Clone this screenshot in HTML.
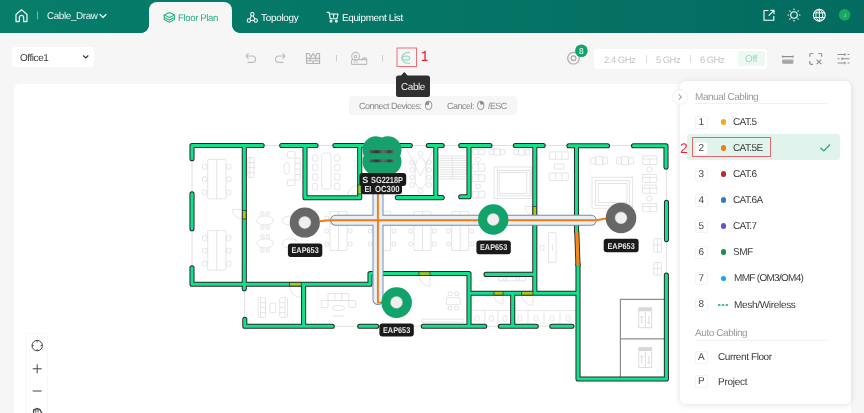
<!DOCTYPE html>
<html><head><meta charset="utf-8">
<style>
*{margin:0;padding:0;box-sizing:border-box}
html,body{text-rendering:geometricPrecision;width:864px;height:413px;overflow:hidden;background:#f6f6f6;font-family:"Liberation Sans",sans-serif;position:relative}
.abs{position:absolute}
.ht,.pt,.kb,svg{will-change:transform}
#hdr{left:0;top:0;width:864px;height:32.6px;background:linear-gradient(90deg,#077d6a 0%,#057566 50%,#046b60 100%)}
.ht{position:absolute;color:#fff;font-size:9.2px;white-space:nowrap;line-height:1}
#tab{left:149px;top:2px;width:83px;height:32px;background:#f6f6f6;border-radius:8px 8px 0 0}
.cnl{position:absolute;width:8px;height:8px;top:24.6px}
#dd{left:12px;top:47px;width:82px;height:20px;background:#fff;border-radius:3px}
#card{left:14px;top:84px;width:837px;height:340px;background:#fff;border-radius:6px}
#panel{left:680px;top:81px;width:171px;height:323px;background:#fff;border-radius:6px;box-shadow:0 1px 6px rgba(0,0,0,.12)}
.pt{position:absolute;font-size:9.6px;letter-spacing:-0.25px;color:#3a3a3a;white-space:nowrap;line-height:1}
.kb{position:absolute;width:12.5px;height:12.5px;border:1px solid #f3f3f3;border-radius:2px;background:#fff;font-size:10px;color:#4a4a4a;text-align:center;line-height:11.6px}
.dot{position:absolute;width:5.5px;height:5.5px;border-radius:50%}
</style></head><body>
<div id="hdr" class="abs"></div>
<div class="abs" style="left:0;top:32.6px;width:864px;height:1.4px;background:#fbfbfb"></div>
<div id="tab" class="abs"></div>
<div class="cnl" style="left:141px;background:radial-gradient(circle at 0 0,transparent 7.6px,#f6f6f6 8.2px)"></div>
<div class="cnl" style="left:232px;background:radial-gradient(circle at 100% 0,transparent 7.6px,#f6f6f6 8.2px)"></div>

<!-- header content -->
<svg class="abs" style="left:0;top:0" width="864" height="32" viewBox="0 0 864 32">
  <g fill="none" stroke="#e6f3ef" stroke-width="1.3" stroke-linejoin="round" stroke-linecap="round">
    <path d="M16,14.5 L21.5,9.8 L27,14.5 V21.5 H23.6 V17.5 A2.1,2.1 0 0 0 19.4,17.5 V21.5 H16 Z"/>
    <path d="M37.5,12 V19" stroke="#7fb9ad" stroke-width="1"/>
    <path d="M100,14.5 L103,17.5 L106,14.5"/>
  </g>
  <!-- floor plan icon -->
  <g fill="none" stroke="#2fb486" stroke-width="1.1" stroke-linejoin="round">
    <path d="M164.2,15 L169.4,12.4 L174.6,15 L169.4,17.6 Z"/>
    <path d="M164.2,15 V17.4 L169.4,20 L174.6,17.4 V15"/>
    <path d="M164.2,17.4 V19.6 L169.4,22.2 L174.6,19.6 V17.4"/>
  </g>
  <!-- topology icon -->
  <g fill="none" stroke="#fff" stroke-width="1.05">
    <circle cx="252.3" cy="14.2" r="1.7"/>
    <circle cx="248.9" cy="20.5" r="1.7"/>
    <circle cx="255.7" cy="20.5" r="1.7"/>
    <path d="M251.5,15.7 L249.8,18.9 M253.1,15.7 L254.8,18.9 M250.6,20.5 H254"/>
  </g>
  <!-- cart icon -->
  <g fill="none" stroke="#fff" stroke-width="1.1" stroke-linejoin="round" stroke-linecap="round">
    <path d="M327,12.2 H329 L330.3,18.8 H337 L338,14 H329.6"/>
    <circle cx="331" cy="21.3" r="0.9"/>
    <circle cx="336.3" cy="21.3" r="0.9"/>
    <path d="M333.6,14.5 V17.3"/>
  </g>
  <!-- right icons -->
  <g fill="none" stroke="#fff" stroke-width="1.1" stroke-linecap="round" stroke-linejoin="round">
    <path d="M768,10.5 H764 V20.3 H773.8 V16.3"/>
    <path d="M769,15.3 L774,10.3 M770.6,10.3 H774 V13.7"/>
    <circle cx="794" cy="15" r="3.3"/>
    <path d="M794,9 V9.6 M794,20.4 V21 M788,15 H788.6 M799.4,15 H800 M789.8,10.8 L790.1,11.1 M797.9,18.9 L798.2,19.2 M789.8,19.2 L790.1,18.9 M797.9,11.1 L798.2,10.8" stroke-width="1.2"/>
    <circle cx="819.3" cy="15.2" r="5.9"/>
    <path d="M819.3,9.3 C814.6,12 814.6,18.4 819.3,21.1 M819.3,9.3 C824,12 824,18.4 819.3,21.1 M819.3,9.3 V21.1 M814,12.9 H824.6 M814,17.5 H824.6" stroke-width="1"/>
  </g>
  <circle cx="844.6" cy="14.8" r="5.8" fill="#19a862"/>
  <text x="843.8" y="16.5" font-size="4" fill="#cfeee0" font-family="Liberation Sans">J</text>
</svg>
<div class="ht" style="left:46.5px;top:11.72px;font-size:9.9px;letter-spacing:-0.38px;color:#eaf5f2">Cable_Draw</div>
<div class="ht" style="left:178px;top:14.02px;font-size:9.6px;letter-spacing:-0.37px;color:#2aae80">Floor Plan</div>
<div class="ht" style="left:261.3px;top:13.72px;font-size:9.9px;letter-spacing:-0.25px;color:#fff">Topology</div>
<div class="ht" style="left:341.7px;top:13.77px;font-size:9.9px;letter-spacing:-0.32px;color:#fff">Equipment List</div>

<!-- toolbar -->
<div id="dd" class="abs"></div>
<div class="ht" style="left:19.6px;top:53.59px;font-size:10px;letter-spacing:-0.45px;color:#3a3a3a">Office1</div>
<svg class="abs" style="left:0;top:36px" width="864" height="48" viewBox="0 36 864 48">
  <path d="M83.3,55.5 L85.8,58 L88.3,55.5" fill="none" stroke="#333" stroke-width="1.1"/>
  <g fill="none" stroke="#bbb" stroke-width="1.1" stroke-linecap="round" stroke-linejoin="round">
    <path d="M246,56 H252.3 A3.2,3.2 0 0 1 252.3,62.4 H248 M248.2,53.6 L246,56 L248.2,58.4"/>
    <path d="M285,56 H278.7 A3.2,3.2 0 0 0 278.7,62.4 H283 M282.8,53.6 L285,56 L282.8,58.4"/>
  </g>
  <g fill="none" stroke="#b5b5b5" stroke-width="1.2">
    <path d="M306.5,53.5 V63.5 H319.5 V53.5 L317,53.5 L315.5,57 L313,53.5 L310.8,57 L309,53.5 Z"/>
    <path d="M306.5,58.3 H319.5 M306.5,61 H319.5 M310,58.3 V61 M316,58.3 V61 M313,61 V63.5"/>
  </g>
  <path d="M336.5,55 V61.5 M382.5,55 V61.5" stroke="#ccc" stroke-width="1"/>
  <g fill="none" stroke="#bcbcbc" stroke-width="1.1">
    <circle cx="355.6" cy="56.3" r="3.9"/>
    <circle cx="355.6" cy="56.5" r="1.3"/>
    <path d="M361.6,59.6 A3,3 0 0 1 367.2,59.6"/><path d="M362.8,59.6 L364.4,57.6 L365.6,59.6" stroke-width="0.7"/>
    <rect x="351.5" y="59.6" width="15.3" height="4.8" rx="1"/>
    <path d="M353.5,62 H358" stroke-width="0.8"/>
  </g>
  <rect x="397" y="48" width="19.5" height="18.5" fill="none" stroke="#ef6f74" stroke-width="1"/>
  <g fill="none" stroke="#8fd6bb" stroke-width="1.05" stroke-linecap="round">
    <path d="M409.6,52.4 C404.5,52.3 401.8,54.8 401.8,58 C401.8,61.2 404.5,63.4 409.6,63.3"/>
    <ellipse cx="405.9" cy="58" rx="3.9" ry="2.1"/>
  </g>
  <path d="M422.1,53.2 L425,51.6 V60.3 M421.9,60.3 H427.6" fill="none" stroke="#e8202a" stroke-width="1.3"/>
  <!-- AP count icon -->
  <g fill="none" stroke="#aaa" stroke-width="1.2">
    <circle cx="573.5" cy="58.2" r="5.8"/>
    <circle cx="573.5" cy="58.2" r="2.4"/>
  </g>
  <circle cx="581.4" cy="50.7" r="6.3" fill="#14a26b"/>
  <text x="581.4" y="53.8" font-size="8.5" fill="#fff" text-anchor="middle" font-family="Liberation Sans">8</text>
  <!-- ruler / fit / sliders -->
  <g fill="none" stroke="#8e8e8e" stroke-width="1.1">
    <path d="M782.5,55.5 V57.8 M793,55.5 V57.8 M782.5,56.6 H793"/>
    <rect x="782.2" y="59.6" width="11.2" height="4.2" rx="1" fill="#a3a3a3" stroke="none"/><path d="M784.2,60.2 V61.6 M786.2,60.2 V61 M788.2,60.2 V61.6 M790.2,60.2 V61 M792,60.2 V61.6" stroke="#d0d0d0" stroke-width="0.6"/>
    <path d="M809.8,56.8 V54.8 Q809.8,53.5 811.1,53.5 H813.2 M818.3,53.5 H820.4 Q821.7,53.5 821.7,54.8 V56.8 M809.8,61 V63 Q809.8,64.3 811.1,64.3 H813" stroke-width="1.2"/><path d="M816.6,59.6 L821.2,64.2 M821.2,59.6 L816.6,64.2" stroke-width="1.1"/>
    <path d="M837.5,54.5 H845 M847.5,54.5 H849.5 M845,53.2 V55.8 M837.5,58.7 H839.5 M842,58.7 H849.5 M842,57.4 V60 M837.5,63 H845 M847.5,63 H849.5 M845,61.7 V64.3"/>
  </g>
</svg>
<div class="abs" style="left:594px;top:49px;width:172.5px;height:19.5px;background:#fff;border-radius:3px"></div>
<div class="abs" style="left:737.5px;top:51px;width:27px;height:15px;background:#eef9f4;border-radius:2px"></div>
<div class="ht" style="left:604px;top:55.39px;font-size:9.4px;letter-spacing:-0.45px;color:#c4c4c4">2.4 GHz</div>
<div class="ht" style="left:655.8px;top:55.39px;font-size:9.4px;letter-spacing:-0.5px;color:#c4c4c4">5 GHz</div>
<div class="ht" style="left:700.2px;top:55.39px;font-size:9.4px;letter-spacing:-0.5px;color:#c4c4c4">6 GHz</div>
<div class="ht" style="left:744.6px;top:54.97px;font-size:9.9px;letter-spacing:-0.2px;color:#9ad8bf">Off</div>
<div class="abs" style="left:646px;top:54.5px;width:1px;height:8px;background:#ddd"></div>
<div class="abs" style="left:690px;top:54.5px;width:1px;height:8px;background:#ddd"></div>

<!-- canvas card -->
<div id="card" class="abs"></div>
<svg id="plan" class="abs" style="left:0;top:0" width="864" height="413" viewBox="0 0 864 413">
  <!-- walls dark -->
  <g id="outline" fill="none" stroke="#dcdcdc" stroke-width="0.9">
    <path d="M192,284 V145.5 H666.3 V379 H578 V326.2 H244.6 V284"/>
  </g>
  <g id="furn" fill="none" stroke="#dcdcdc" stroke-width="0.75">
<rect x="207.7" y="159.3" width="18.2" height="39.5" rx="0.5"/>
<path d="M216.8,159.3 L216.8,198.8"/>
<rect x="202.5" y="164.4" width="4.3" height="4.6" rx="0.8"/>
<rect x="226.6" y="164.4" width="4.3" height="4.6" rx="0.8"/>
<rect x="202.5" y="177.0" width="4.3" height="4.6" rx="0.8"/>
<rect x="226.6" y="177.0" width="4.3" height="4.6" rx="0.8"/>
<rect x="202.5" y="190.1" width="4.3" height="4.6" rx="0.8"/>
<rect x="226.6" y="190.1" width="4.3" height="4.6" rx="0.8"/>
<rect x="207.7" y="230.6" width="18.2" height="39.5" rx="0.5"/>
<path d="M216.8,230.6 L216.8,270.1"/>
<rect x="202.5" y="235.7" width="4.3" height="4.6" rx="0.8"/>
<rect x="226.6" y="235.7" width="4.3" height="4.6" rx="0.8"/>
<rect x="202.5" y="248.3" width="4.3" height="4.6" rx="0.8"/>
<rect x="226.6" y="248.3" width="4.3" height="4.6" rx="0.8"/>
<rect x="202.5" y="261.4" width="4.3" height="4.6" rx="0.8"/>
<rect x="226.6" y="261.4" width="4.3" height="4.6" rx="0.8"/>
<rect x="247.9" y="157.6" width="6.1" height="20.0" rx="1"/>
<path d="M247.9,162.6 L254.0,162.6"/>
<path d="M247.9,167.6 L254.0,167.6"/>
<path d="M247.9,172.6 L254.0,172.6"/>
<path d="M250.0,157.6 L250.0,177.6"/>
<ellipse cx="286.8" cy="168.3" rx="2.7" ry="6"/>
<rect x="287.6" y="151.6" width="7.4" height="6.4" rx="0.5"/>
<rect x="295.0" y="158.0" width="5.2" height="22.0" rx="0.5"/>
<path d="M295.0,163.5 L300.2,163.5"/>
<path d="M295.0,169.0 L300.2,169.0"/>
<path d="M295.0,174.5 L300.2,174.5"/>
<rect x="287.6" y="180.0" width="7.4" height="5.6" rx="0.5"/>
<rect x="321.7" y="153.0" width="9.3" height="36.0" rx="2"/>
<rect x="312.5" y="154.8" width="5.3" height="6.4" rx="1.5"/>
<rect x="334.6" y="154.8" width="5.3" height="6.4" rx="1.5"/>
<rect x="312.5" y="164.3" width="5.3" height="6.4" rx="1.5"/>
<rect x="334.6" y="164.3" width="5.3" height="6.4" rx="1.5"/>
<rect x="312.5" y="173.8" width="5.3" height="6.4" rx="1.5"/>
<rect x="334.6" y="173.8" width="5.3" height="6.4" rx="1.5"/>
<rect x="312.5" y="183.3" width="5.3" height="6.4" rx="1.5"/>
<rect x="334.6" y="183.3" width="5.3" height="6.4" rx="1.5"/>
<path d="M415.2,165 Q420.6,150 426.1,165 L426.1,183 Q420.6,194 415.2,183 Z"/>
<circle cx="420.6" cy="153.8" r="2.4"/>
<circle cx="420.6" cy="190.8" r="2.4"/>
<circle cx="412.2" cy="162.3" r="2.4"/>
<circle cx="429.0" cy="162.3" r="2.4"/>
<circle cx="412.2" cy="170.0" r="2.4"/>
<circle cx="429.0" cy="170.0" r="2.4"/>
<circle cx="412.2" cy="177.6" r="2.4"/>
<circle cx="429.0" cy="177.6" r="2.4"/>
<circle cx="412.2" cy="185.0" r="2.4"/>
<circle cx="429.0" cy="185.0" r="2.4"/>
<path d="M407.0,150.0 L420.6,176.0"/>
<path d="M420.6,176.0 L433.0,150.0"/>
<path d="M439.2,156.0 L466.0,156.0"/>
<path d="M439.2,158.3 L466.0,158.3"/>
<path d="M439.2,160.6 L466.0,160.6"/>
<path d="M439.2,162.9 L466.0,162.9"/>
<path d="M439.2,165.2 L466.0,165.2"/>
<path d="M439.2,167.5 L466.0,167.5"/>
<path d="M439.2,169.8 L466.0,169.8"/>
<path d="M439.2,172.1 L466.0,172.1"/>
<path d="M439.2,174.4 L466.0,174.4"/>
<path d="M439.2,176.7 L466.0,176.7"/>
<path d="M439.2,179.0 L466.0,179.0"/>
<path d="M452.3,156.0 L452.3,179.2"/>
<rect x="472.6" y="149.4" width="12.1" height="5.0" rx="0.5"/>
<path d="M478.6,149.4 L478.6,154.4"/>
<rect x="472.6" y="163.9" width="12.1" height="7.5" rx="0.5"/>
<path d="M478.6,163.9 L478.6,171.4"/>
<rect x="472.6" y="174.8" width="12.1" height="6.8" rx="0.5"/>
<path d="M478.6,174.8 L478.6,181.6"/>
<rect x="472.6" y="191.2" width="12.1" height="6.8" rx="0.5"/>
<path d="M478.6,191.2 L478.6,198.0"/>
<circle cx="478.0" cy="159.5" r="2.5"/>
<circle cx="478.0" cy="186.5" r="2.5"/>
<rect x="489.3" y="149.6" width="4.5" height="5.0" rx="0.5"/>
<rect x="493.8" y="148.8" width="6.5" height="6.4" rx="0.5"/>
<rect x="500.3" y="149.6" width="4.5" height="5.0" rx="0.5"/>
<rect x="514.0" y="149.6" width="4.5" height="5.0" rx="0.5"/>
<rect x="518.5" y="148.8" width="6.5" height="6.4" rx="0.5"/>
<rect x="525.0" y="149.6" width="4.5" height="5.0" rx="0.5"/>
<rect x="494.0" y="167.0" width="37.2" height="31.4" rx="0"/>
<rect x="497.3" y="170.4" width="32.7" height="25.4" rx="0"/>
<rect x="499.2" y="172.6" width="27.6" height="21.0" rx="0"/>
<rect x="549.3" y="151.9" width="19.0" height="7.4" rx="0.5"/>
<path d="M555.6,153.0 L555.6,159.3"/>
<path d="M562.0,153.0 L562.0,159.3"/>
<rect x="554.5" y="163.9" width="9.2" height="5.2" rx="0.5"/>
<rect x="549.3" y="173.0" width="19.0" height="7.6" rx="0.5"/>
<path d="M555.6,173.0 L555.6,179.5"/>
<path d="M562.0,173.0 L562.0,179.5"/>
<rect x="548.6" y="232.6" width="7.6" height="30.0" rx="0.5"/>
<path d="M552.4,244.0 L552.4,251.0"/>
<rect x="540.5" y="245.5" width="3.5" height="4.5" rx="0.5"/>
<rect x="590.7" y="157.6" width="5.0" height="6.3" rx="0.5"/>
<rect x="595.7" y="156.6" width="7.0" height="8.2" rx="0.5"/>
<rect x="602.7" y="157.6" width="5.0" height="6.3" rx="0.5"/>
<rect x="616.6" y="157.6" width="5.0" height="6.3" rx="0.5"/>
<rect x="621.6" y="156.6" width="7.0" height="8.2" rx="0.5"/>
<rect x="628.6" y="157.6" width="5.0" height="6.3" rx="0.5"/>
<rect x="642.6" y="156.0" width="14.3" height="8.5" rx="0.5"/>
<path d="M649.7,158.0 L649.7,164.5"/>
<path d="M642.6,159.0 L656.9,159.0"/>
<rect x="642.6" y="174.4" width="14.3" height="7.9" rx="0.5"/>
<path d="M649.7,176.4 L649.7,182.3"/>
<path d="M642.6,177.4 L656.9,177.4"/>
<rect x="642.6" y="185.2" width="14.3" height="8.1" rx="0.5"/>
<path d="M649.7,187.2 L649.7,193.3"/>
<path d="M642.6,188.2 L656.9,188.2"/>
<rect x="642.6" y="203.6" width="14.3" height="8.1" rx="0.5"/>
<path d="M649.7,205.6 L649.7,211.7"/>
<path d="M642.6,206.6 L656.9,206.6"/>
<circle cx="649.5" cy="169.4" r="2.6"/>
<circle cx="649.5" cy="198.5" r="2.6"/>
<rect x="592.0" y="177.2" width="40.7" height="31.0" rx="0"/>
<rect x="595.3" y="180.6" width="34.0" height="24.7" rx="0"/>
<rect x="598.2" y="183.6" width="28.8" height="18.9" rx="0"/>
<rect x="653.8" y="238.7" width="7.7" height="13.5" rx="0.5"/>
<path d="M657.6,238.7 L657.6,252.2"/>
<path d="M653.8,245.0 L661.5,245.0"/>
<rect x="653.8" y="262.5" width="7.7" height="12.5" rx="0.5"/>
<path d="M657.6,262.5 L657.6,275.0"/>
<path d="M653.8,268.5 L661.5,268.5"/>
<ellipse cx="265.1" cy="220.5" rx="8.3" ry="4.6"/>
<rect x="260.7" y="212.0" width="3.2" height="3.0" rx="0.3"/>
<rect x="260.7" y="226.0" width="3.2" height="3.0" rx="0.3"/>
<rect x="266.2" y="212.0" width="3.2" height="3.0" rx="0.3"/>
<rect x="266.2" y="226.0" width="3.2" height="3.0" rx="0.3"/>
<ellipse cx="290.5" cy="220.5" rx="8.3" ry="4.6"/>
<ellipse cx="265.1" cy="243.4" rx="8.3" ry="4.6"/>
<rect x="260.7" y="234.9" width="3.2" height="3.0" rx="0.3"/>
<rect x="260.7" y="248.9" width="3.2" height="3.0" rx="0.3"/>
<rect x="266.2" y="234.9" width="3.2" height="3.0" rx="0.3"/>
<rect x="266.2" y="248.9" width="3.2" height="3.0" rx="0.3"/>
<ellipse cx="290.5" cy="243.4" rx="8.3" ry="4.6"/>
<rect x="330.0" y="211.3" width="17.0" height="39.3" rx="0.5"/>
<path d="M338.5,211.3 L338.5,250.6"/>
<rect x="325.0" y="216.2" width="3.4" height="3.6" rx="0.3"/>
<rect x="348.6" y="216.2" width="3.4" height="3.6" rx="0.3"/>
<rect x="325.0" y="229.2" width="3.4" height="3.6" rx="0.3"/>
<rect x="348.6" y="229.2" width="3.4" height="3.6" rx="0.3"/>
<rect x="325.0" y="242.2" width="3.4" height="3.6" rx="0.3"/>
<rect x="348.6" y="242.2" width="3.4" height="3.6" rx="0.3"/>
<rect x="373.5" y="211.3" width="17.0" height="39.3" rx="0.5"/>
<path d="M382.0,211.3 L382.0,250.6"/>
<rect x="368.5" y="216.2" width="3.4" height="3.6" rx="0.3"/>
<rect x="392.1" y="216.2" width="3.4" height="3.6" rx="0.3"/>
<rect x="368.5" y="229.2" width="3.4" height="3.6" rx="0.3"/>
<rect x="392.1" y="229.2" width="3.4" height="3.6" rx="0.3"/>
<rect x="368.5" y="242.2" width="3.4" height="3.6" rx="0.3"/>
<rect x="392.1" y="242.2" width="3.4" height="3.6" rx="0.3"/>
<rect x="414.0" y="211.3" width="17.0" height="39.3" rx="0.5"/>
<path d="M422.5,211.3 L422.5,250.6"/>
<rect x="409.0" y="216.2" width="3.4" height="3.6" rx="0.3"/>
<rect x="432.6" y="216.2" width="3.4" height="3.6" rx="0.3"/>
<rect x="409.0" y="229.2" width="3.4" height="3.6" rx="0.3"/>
<rect x="432.6" y="229.2" width="3.4" height="3.6" rx="0.3"/>
<rect x="409.0" y="242.2" width="3.4" height="3.6" rx="0.3"/>
<rect x="432.6" y="242.2" width="3.4" height="3.6" rx="0.3"/>
<rect x="451.7" y="211.3" width="17.0" height="39.3" rx="0.5"/>
<path d="M460.2,211.3 L460.2,250.6"/>
<rect x="446.7" y="216.2" width="3.4" height="3.6" rx="0.3"/>
<rect x="470.3" y="216.2" width="3.4" height="3.6" rx="0.3"/>
<rect x="446.7" y="229.2" width="3.4" height="3.6" rx="0.3"/>
<rect x="470.3" y="229.2" width="3.4" height="3.6" rx="0.3"/>
<rect x="446.7" y="242.2" width="3.4" height="3.6" rx="0.3"/>
<rect x="470.3" y="242.2" width="3.4" height="3.6" rx="0.3"/>
<rect x="258.1" y="297.8" width="7.5" height="19.6" rx="1"/>
<path d="M260.5,297.8 L260.5,317.4"/>
<path d="M260.5,302.7 L265.6,302.7"/>
<path d="M260.5,307.6 L265.6,307.6"/>
<path d="M260.5,312.5 L265.6,312.5"/>
<rect x="279.7" y="297.8" width="7.8" height="19.6" rx="1"/>
<path d="M285.0,297.8 L285.0,317.4"/>
<path d="M279.7,302.7 L285.0,302.7"/>
<path d="M279.7,307.6 L285.0,307.6"/>
<path d="M279.7,312.5 L285.0,312.5"/>
<rect x="270.0" y="303.2" width="5.8" height="9.2" rx="0.5"/>
<rect x="328.0" y="293.5" width="20.8" height="7.0" rx="0.5"/>
<path d="M334.9,293.5 L334.9,300.5"/>
<path d="M341.8,293.5 L341.8,300.5"/>
<rect x="321.3" y="300.5" width="6.7" height="7.1" rx="0.5"/>
<rect x="348.8" y="300.5" width="6.8" height="7.1" rx="0.5"/>
<path d="M328,300.5 H348.8"/>
<ellipse cx="338.5" cy="308.0" rx="6" ry="2.5"/>
<path d="M332.5,316.0 L344.6,316.0"/>
<rect x="446.4" y="297.6" width="13.8" height="6.8" rx="0.5"/>
<rect x="448.2" y="292.0" width="3.6" height="3.5" rx="0.3"/>
<rect x="448.2" y="306.5" width="3.6" height="3.5" rx="0.3"/>
<rect x="454.8" y="292.0" width="3.6" height="3.5" rx="0.3"/>
<rect x="454.8" y="306.5" width="3.6" height="3.5" rx="0.3"/>
<rect x="421.8" y="319.2" width="42.2" height="3.0" rx="0.5"/>
<rect x="498.6" y="276.9" width="27.1" height="3.9" rx="0.5"/>
<circle cx="505.0" cy="278.8" r="1.6"/>
<circle cx="518.0" cy="278.8" r="1.6"/>
<path d="M469.0,310.4 L577.0,310.4"/>
<path d="M485.0,310.4 L485.0,324.0"/>
<path d="M498.0,310.4 L498.0,324.0"/>
<path d="M528.0,310.4 L528.0,324.0"/>
<path d="M544.0,310.4 L544.0,324.0"/>
<path d="M560.0,310.4 L560.0,324.0"/>
<ellipse cx="477.0" cy="318.5" rx="2.2" ry="3"/>
<ellipse cx="491.5" cy="318.5" rx="2.2" ry="3"/>
<ellipse cx="505.0" cy="318.5" rx="2.2" ry="3"/>
<ellipse cx="520.0" cy="318.5" rx="2.2" ry="3"/>
<ellipse cx="536.0" cy="318.5" rx="2.2" ry="3"/>
<ellipse cx="552.0" cy="318.5" rx="2.2" ry="3"/>
<ellipse cx="568.0" cy="318.5" rx="2.2" ry="3"/>
<path d="M232,209.6 A12.3,9.4 0 0 0 244.3,219"/>
<path d="M232,209.6 H244"/>
<path d="M347.7,195.5 A12,10.5 0 0 1 359.7,185"/>
<path d="M289.6,286 A11.8,11.5 0 0 0 301.4,297.5"/>
<path d="M419,275.3 A11,11 0 0 0 430,286.3 V275.3"/>
<path d="M494,295 A9,9 0 0 0 503,304 V295"/>
<path d="M521.7,295 A11.3,10.5 0 0 0 533,305.5 V295"/>
<path d="M525,206.5 A9.8,8.9 0 0 0 534.8,215.4"/>
<path d="M525,206.5 L533,206.5"/>
</g>
  <g fill="none" stroke="#8d8d8d" stroke-width="1.2">
    <path d="M666,299.3 H620.4 V379 M620.4,338.9 H666"/>
  </g>
  <g fill="none" stroke="#cfcfcf" stroke-width="0.7">
    <rect x="638.8" y="307.8" width="13" height="20"/>
    <rect x="638.8" y="347.5" width="13" height="20"/>
    <path d="M645.3,311.5 V327.8 M645.3,351.2 V367.5"/>
    <path d="M641.7,324 V316 M640.3,317.5 L641.7,316 L643.1,317.5 M648.9,316 V324 M647.5,322.5 L648.9,324 L650.3,322.5"/>
    <path d="M641.7,363.7 V355.7 M640.3,357.2 L641.7,355.7 L643.1,357.2 M648.9,355.7 V363.7 M647.5,362.2 L648.9,363.7 L650.3,362.2"/>
  </g>
  <rect x="639" y="308" width="12.6" height="3.3" fill="#d8d8d8"/>
  <rect x="639" y="347.7" width="12.6" height="3.3" fill="#d8d8d8"/>

  <g id="walls" fill="none" stroke-linecap="round" stroke-linejoin="round">
    <path d="M576.8,231.5 L578,265.3" stroke="#2a2a2a" stroke-width="5.1"/>
    <path d="M192.0,158.7 L192.0,145.5 L262.2,145.5 M244.3,145.5 L244.3,288.7 M281.7,145.5 L316.1,145.5 M305.0,145.5 L305.0,197.7 L359.7,197.7 L359.7,145.5 M334.9,145.5 L410.3,145.5 M428.3,145.5 L442.2,145.5 M435.8,145.5 L435.8,197.6 M397.3,197.6 L442.2,197.6 M460.7,145.5 L490.0,145.5 M469.0,145.5 L469.0,196.8 L460.7,196.8 M515.3,145.5 L543.2,145.5 M534.8,145.5 L534.8,292.7 M568.9,145.8 L607.5,145.8 M576.5,145.8 L576.5,231.5 M578.0,264.5 L578.0,379.0 L666.4,379.0 L666.4,275 M633.5,145.8 L666.0,145.8 L666.0,167.1 M666.5,202.4 L666.5,239.6 M192.0,193.8 L192.0,228.7 M192.0,267.7 L192.0,284.2 L370.0,284.2 L370.0,273.5 L469.0,273.5 L469.0,326.2 M303.6,284.2 L303.6,326.2 M244.8,319.3 L244.8,326.2 L332.3,326.2 M359.7,326.2 L376.7,326.2 M423.3,326.2 L484.7,326.2 M500.3,326.2 L536.3,326.2 M551.8,326.2 L571.9,326.2 M486.0,274.4 L534.8,274.4 M469.0,293.2 L577.5,293.2 M512.7,293.2 L512.7,325.9" stroke="#2a2a2a" stroke-width="5.1"/>
    <path d="M192.0,158.7 L192.0,145.5 L262.2,145.5 M244.3,145.5 L244.3,288.7 M281.7,145.5 L316.1,145.5 M305.0,145.5 L305.0,197.7 L359.7,197.7 L359.7,145.5 M334.9,145.5 L410.3,145.5 M428.3,145.5 L442.2,145.5 M435.8,145.5 L435.8,197.6 M397.3,197.6 L442.2,197.6 M460.7,145.5 L490.0,145.5 M469.0,145.5 L469.0,196.8 L460.7,196.8 M515.3,145.5 L543.2,145.5 M534.8,145.5 L534.8,292.7 M568.9,145.8 L607.5,145.8 M576.5,145.8 L576.5,231.5 M578.0,264.5 L578.0,379.0 L666.4,379.0 L666.4,275 M633.5,145.8 L666.0,145.8 L666.0,167.1 M666.5,202.4 L666.5,239.6 M192.0,193.8 L192.0,228.7 M192.0,267.7 L192.0,284.2 L370.0,284.2 L370.0,273.5 L469.0,273.5 L469.0,326.2 M303.6,284.2 L303.6,326.2 M244.8,319.3 L244.8,326.2 L332.3,326.2 M359.7,326.2 L376.7,326.2 M423.3,326.2 L484.7,326.2 M500.3,326.2 L536.3,326.2 M551.8,326.2 L571.9,326.2 M486.0,274.4 L534.8,274.4 M469.0,293.2 L577.5,293.2 M512.7,293.2 L512.7,325.9" stroke="#10e28b" stroke-width="3.1"/>
    <path d="M576.8,231.5 L578,265.3" stroke="#f08a1e" stroke-width="3.3" stroke-linecap="butt"/>
  </g>
  <g id="doors" stroke="#2e2e2e" stroke-width="0.7" fill="#94d21c">
    <rect x="357.9" y="185" width="3.6" height="9"/>
    <rect x="242.5" y="210.6" width="3.6" height="8.4"/>
    <rect x="533" y="206.5" width="3.6" height="8.9"/>
    <rect x="289.6" y="282.5" width="11.6" height="3.5"/>
    <rect x="419" y="271.8" width="11" height="3.5"/>
    <rect x="493.9" y="291.5" width="9.1" height="3.5"/>
    <rect x="521.7" y="291.5" width="11.3" height="3.5"/>
  </g>
  <g id="tray">
    <path d="M335.6,220.3 H591.3 M378,192 V299.5" fill="none" stroke="#6f8fb3" stroke-width="11" stroke-linecap="round"/>
    <path d="M335.6,220.3 H591.3 M378,192 V299.5" fill="none" stroke="#e9eff6" stroke-width="9" stroke-linecap="round"/>
    <path d="M319.8,221.2 C326,220.4 328,220.3 333,220.3 H596 L606,218.5" fill="none" stroke="#f47a12" stroke-width="1.9"/>
    <path d="M377.9,190 V302.6 H383" fill="none" stroke="#f47a12" stroke-width="1.9"/>
  </g>
  <g id="aps">
    <circle cx="304.8" cy="222.5" r="15.1" fill="#676767"/>
    <circle cx="304.8" cy="222.5" r="6" fill="#efefef" stroke="#d6d6d6" stroke-width="0.5"/>
    <circle cx="493.2" cy="219.5" r="15.2" fill="#12a26b"/>
    <circle cx="493.2" cy="219.5" r="5.9" fill="#f0eeee" stroke="#d6d6d6" stroke-width="0.5"/>
    <circle cx="621" cy="218" r="15.3" fill="#676767"/>
    <circle cx="621" cy="217.8" r="5.9" fill="#efefef" stroke="#d6d6d6" stroke-width="0.5"/>
    <circle cx="396.6" cy="302.6" r="15.3" fill="#12a26b"/>
    <circle cx="396.5" cy="302.4" r="5.9" fill="#f0eeee" stroke="#d6d6d6" stroke-width="0.5"/>
    <g fill="#15a06c"><circle cx="376" cy="149.7" r="13.5"/><circle cx="388" cy="149.7" r="13.5"/><circle cx="376" cy="161.7" r="13.5"/><circle cx="388" cy="161.7" r="13.5"/><rect x="370" y="143" width="24" height="25"/></g>
  </g>
  <g id="sw">
    <defs><linearGradient id="bar" x1="0" x2="1" y1="0" y2="0"><stop offset="0" stop-color="#5a5a5a"/><stop offset="0.3" stop-color="#333"/><stop offset="0.55" stop-color="#6a6a6a"/><stop offset="0.8" stop-color="#3a3a3a"/><stop offset="1" stop-color="#777"/></linearGradient></defs>
    <rect x="369.5" y="150.3" width="25.3" height="2.9" rx="1" fill="url(#bar)"/>
    <rect x="369.5" y="159.4" width="25.3" height="2.9" rx="1" fill="url(#bar)"/>
  </g>
  <g id="labels" font-family="Liberation Sans" font-weight="bold" fill="#e8e8e8" font-size="8.4">
    <rect x="287.9" y="243.4" width="34.4" height="13.5" rx="3" fill="#1a1a1a"/>
    <text x="291.5" y="253" textLength="27.2" lengthAdjust="spacingAndGlyphs">EAP653</text>
    <rect x="476.4" y="240.4" width="34.4" height="13.8" rx="3" fill="#1a1a1a"/>
    <text x="480.0" y="250.3" textLength="27.2" lengthAdjust="spacingAndGlyphs">EAP653</text>
    <rect x="603.7" y="238.7" width="34.9" height="13.5" rx="3" fill="#1a1a1a"/>
    <text x="607.5" y="248.5" textLength="27.2" lengthAdjust="spacingAndGlyphs">EAP653</text>
    <rect x="379.4" y="323.5" width="34.4" height="12.9" rx="3" fill="#1a1a1a"/>
    <text x="383.0" y="333" textLength="27.2" lengthAdjust="spacingAndGlyphs">EAP653</text>
    <rect x="359.4" y="173.1" width="46.8" height="13" rx="3" fill="#1a1a1a"/>
    <rect x="360.8" y="182" width="41.2" height="12.2" rx="3" fill="#1a1a1a"/>
    <text x="362.3" y="182.6" font-size="9">S</text>
    <text x="371" y="182.6" font-size="8.8" textLength="32" lengthAdjust="spacingAndGlyphs">SG2218P</text>
    <text x="364.5" y="192.2" font-size="8.8" textLength="6.8" lengthAdjust="spacingAndGlyphs">EI</text>
    <text x="375" y="192.2" font-size="8.8" textLength="24.5" lengthAdjust="spacingAndGlyphs">OC300</text>
  </g>
</svg>


<!-- connect hint bar -->
<div class="abs" style="left:348.8px;top:95.8px;width:168px;height:19.6px;background:#f6f6f6;border-radius:4px;box-shadow:0 0 2px rgba(0,0,0,.03)"></div>
<div class="ht" style="left:359.2px;top:102.03px;font-size:9px;letter-spacing:-0.5px;color:#8a8a8a">Connect Devices:</div>
<div class="ht" style="left:446.7px;top:102.03px;font-size:9px;letter-spacing:-0.5px;color:#8a8a8a">Cancel:</div>
<div class="ht" style="left:488.3px;top:102.03px;font-size:9px;letter-spacing:-0.6px;color:#8a8a8a">/ESC</div>
<svg class="abs" style="left:0;top:0" width="864" height="120" viewBox="0 0 864 120">
  <g fill="none" stroke="#8a8a8a" stroke-width="0.9">
    <rect x="425.5" y="101.2" width="6.2" height="8.4" rx="3.1"/>
    <path d="M428.6,101.2 V104.6 M425.5,104.6 H428.6"/>
    <rect x="477.6" y="101.2" width="6.2" height="8.4" rx="3.1"/>
    <path d="M480.7,101.2 V104.6 M425.5,104.6"/>
  </g>
  <path d="M425.8,104.4 A3,3 0 0 1 428.6,101.3 V104.4 Z M480.7,101.3 A3,3 0 0 1 483.5,104.4 H480.7 Z" fill="#8a8a8a"/>
  <!-- tooltip -->
  <path d="M399,75.6 H401 L404.3,72 L407.6,75.6 H427.5 A2.5,2.5 0 0 1 430,78.1 V94.5 A2.5,2.5 0 0 1 427.5,97 H398.5 A2.5,2.5 0 0 1 396,94.5 V78.1 A2.5,2.5 0 0 1 398.5,75.6 Z" fill="#2f2f2f"/>
</svg>
<div class="ht" style="left:400.8px;top:82.77px;font-size:9.9px;letter-spacing:-0.36px;color:#f2f2f2">Cable</div>

<!-- zoom control -->
<div class="abs" style="left:27px;top:334px;width:20px;height:90px;background:#fff;border-radius:3px;box-shadow:0 0 3px rgba(0,0,0,.08)"></div>
<svg class="abs" style="left:0;top:330px" width="80" height="83" viewBox="0 330 80 83">
  <g fill="none" stroke="#444" stroke-width="1">
    <circle cx="37.2" cy="345.6" r="5.2"/>
    <path d="M37.2,340.4 V342.2 M37.2,349 V350.8 M32,345.6 H33.8 M40.6,345.6 H42.4"/>
    <path d="M37.2,364.3 V373.3 M32.7,368.8 H41.7"/>
    <path d="M32.7,391 H41.7"/>
    <path d="M33.6,414 V410.6 A1.1,1.1 0 0 1 35.8,410.6 V409.4 A1.1,1.1 0 0 1 38,409.4 V410 A1.1,1.1 0 0 1 40.2,410.4 L41.8,413" stroke-width="1.3"/><path d="M35.8,410.6 V412.5 M38,410 V412.5" stroke-width="1"/>
  </g>
</svg>

<!-- side panel -->
<div id="panel" class="abs"></div>
<div class="abs" style="left:673px;top:89.5px;width:14px;height:14px;border-radius:50%;background:#fff;box-shadow:0 0 2px rgba(0,0,0,.15)"></div>
<svg class="abs" style="left:673px;top:89.5px" width="14" height="14"><path d="M5.8,4.3 L8.4,7 L5.8,9.7" fill="none" stroke="#777" stroke-width="1"/></svg>
<div class="pt" style="left:695px;top:93.18px;font-size:10px;letter-spacing:-0.45px;color:#9a9a9a">Manual Cabling</div>
<div class="abs" style="left:695px;top:103px;width:132px;height:1px;background:#f0f0f0"></div>
<div class="abs" style="left:687px;top:133.8px;width:153px;height:26.4px;background:#e0f3ec;border-radius:3px"></div>
<div class="abs" style="left:692px;top:137.3px;width:79px;height:19.7px;border:1px solid #e06868"></div>
<div class="ht" style="left:680px;top:141.4px;color:#e8283a;font-size:14px;letter-spacing:0">2</div>
<svg class="abs" style="left:818px;top:142px" width="14" height="12"><path d="M2.5,5.8 L5.8,9 L12,2.5" fill="none" stroke="#2aa57a" stroke-width="1.2"/></svg>
<div class="kb" style="left:695px;top:115.8px">1</div>
<div class="dot" style="left:720.5px;top:119.25px;background:#f5a623"></div>
<div class="pt" style="left:733px;top:117.88px;font-size:10px;letter-spacing:-0.6px;color:#3a3a3a">CAT.5</div>
<div class="kb" style="left:695px;top:141.8px">2</div>
<div class="dot" style="left:720.5px;top:145.25px;background:#f07c14"></div>
<div class="pt" style="left:733px;top:143.88px;font-size:10px;letter-spacing:-0.6px;color:#3a3a3a">CAT.5E</div>
<div class="kb" style="left:695px;top:167.8px">3</div>
<div class="dot" style="left:720.5px;top:171.25px;background:#c9202a"></div>
<div class="pt" style="left:733px;top:169.88px;font-size:10px;letter-spacing:-0.6px;color:#3a3a3a">CAT.6</div>
<div class="kb" style="left:695px;top:193.8px">4</div>
<div class="dot" style="left:720.5px;top:197.25px;background:#2f7dc3"></div>
<div class="pt" style="left:733px;top:196.08px;font-size:10px;letter-spacing:-0.6px;color:#3a3a3a">CAT.6A</div>
<div class="kb" style="left:695px;top:219.8px">5</div>
<div class="dot" style="left:720.5px;top:223.25px;background:#6b52c8"></div>
<div class="pt" style="left:733px;top:222.08px;font-size:10px;letter-spacing:-0.6px;color:#3a3a3a">CAT.7</div>
<div class="kb" style="left:695px;top:245.8px">6</div>
<div class="dot" style="left:720.5px;top:249.25px;background:#1d8c4f"></div>
<div class="pt" style="left:733px;top:248.08px;font-size:10px;letter-spacing:-0.45px;color:#3a3a3a">SMF</div>
<div class="kb" style="left:695px;top:272.3px">7</div>
<div class="dot" style="left:720.5px;top:275.75px;background:#1ba3e8"></div>
<div class="pt" style="left:733.5px;top:274.49px;font-size:10px;letter-spacing:-0.7px;color:#3a3a3a">MMF (OM3/OM4)</div>
<div class="kb" style="left:695px;top:298.3px">8</div>
<svg class="abs" style="left:717px;top:302.5px" width="13" height="4"><path d="M1,2 H12" stroke="#17a673" stroke-width="1.6" stroke-dasharray="2.4 1.4"/></svg>
<div class="pt" style="left:733.5px;top:300.59px;font-size:10px;letter-spacing:-0.31px;color:#3a3a3a">Mesh/Wireless</div>
<div class="pt" style="left:695px;top:329.09px;font-size:10px;letter-spacing:-0.42px;color:#9a9a9a">Auto Cabling</div>
<div class="abs" style="left:695px;top:340px;width:132px;height:1px;background:#f0f0f0"></div>
<div class="kb" style="left:695px;top:350.8px">A</div>
<div class="pt" style="left:718px;top:353.49px;font-size:10px;letter-spacing:-0.4px;color:#3a3a3a">Current Floor</div>
<div class="kb" style="left:695px;top:375.2px">P</div>
<div class="pt" style="left:718px;top:377.69px;font-size:10px;letter-spacing:-0.26px;color:#3a3a3a">Project</div>

</body></html>
